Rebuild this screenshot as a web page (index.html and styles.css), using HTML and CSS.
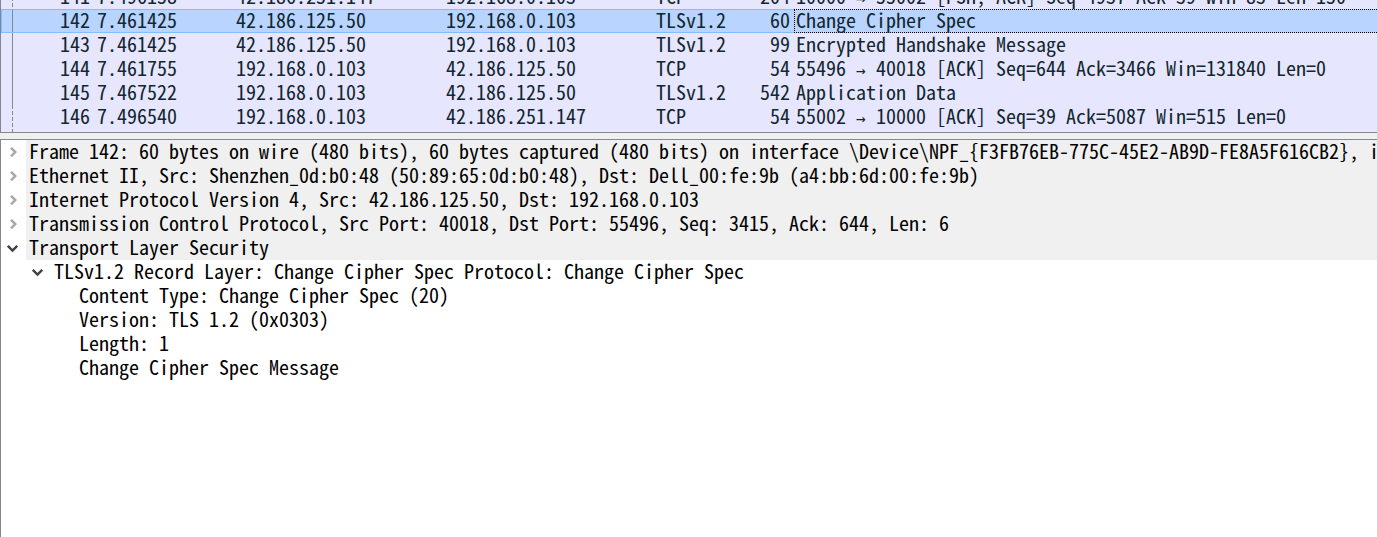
FILE: index.html
```
<!DOCTYPE html>
<html lang="en">
<head>
<meta charset="utf-8">
<title>Packet capture</title>
<link rel="stylesheet" href="styles.css">
</head>
<body>
<main class="window">
  <section class="packets" aria-label="Packet list">
    <table class="packet-table">
      <colgroup><col class="c-mark"><col class="c-no"><col class="c-time"><col class="c-addr"><col class="c-addr"><col class="c-proto"><col class="c-len"><col></colgroup>
      <tbody>
        <tr><td class="mark dashed"></td><td class="num">141</td><td>7.496158</td><td>42.186.251.147</td><td>192.168.0.103</td><td>TCP</td><td class="num">204</td><td class="info">10000 <span class="arrow">→</span> 55002 [PSH, ACK] Seq=4937 Ack=39 Win=83 Len=150</td></tr>
        <tr class="selected"><td class="mark"></td><td class="num">142</td><td>7.461425</td><td>42.186.125.50</td><td>192.168.0.103</td><td>TLSv1.2</td><td class="num">60</td><td class="info focused">Change Cipher Spec</td></tr>
        <tr><td class="mark"></td><td class="num">143</td><td>7.461425</td><td>42.186.125.50</td><td>192.168.0.103</td><td>TLSv1.2</td><td class="num">99</td><td class="info">Encrypted Handshake Message</td></tr>
        <tr><td class="mark"></td><td class="num">144</td><td>7.461755</td><td>192.168.0.103</td><td>42.186.125.50</td><td>TCP</td><td class="num">54</td><td class="info">55496 <span class="arrow">→</span> 40018 [ACK] Seq=644 Ack=3466 Win=131840 Len=0</td></tr>
        <tr><td class="mark"></td><td class="num">145</td><td>7.467522</td><td>192.168.0.103</td><td>42.186.125.50</td><td>TLSv1.2</td><td class="num">542</td><td class="info">Application Data</td></tr>
        <tr><td class="mark dashed"></td><td class="num">146</td><td>7.496540</td><td>192.168.0.103</td><td>42.186.251.147</td><td>TCP</td><td class="num">54</td><td class="info">55002 <span class="arrow">→</span> 10000 [ACK] Seq=39 Ack=5087 Win=515 Len=0</td></tr>
      </tbody>
      <tfoot><tr class="rest"><td class="mark dashed"></td><td colspan="7"></td></tr></tfoot>
    </table>
  </section>
  <section class="details" aria-label="Packet details">
    <ul class="tree">
      <li><div class="node"><button class="toggle" aria-label="Expand frame"><svg class="chevron closed" viewBox="0 0 12 12"><path d="M4 1.800l4.300 4.300L4 10.400"/></svg></button><span class="label shaded">Frame 142: 60 bytes on wire (480 bits), 60 bytes captured (480 bits) on interface \Device\NPF_{F3FB76EB-775C-45E2-AB9D-FE8A5F616CB2}, id 0</span></div></li>
      <li><div class="node"><button class="toggle" aria-label="Expand Ethernet"><svg class="chevron closed" viewBox="0 0 12 12"><path d="M4 1.800l4.300 4.300L4 10.400"/></svg></button><span class="label shaded">Ethernet II, Src: Shenzhen_0d:b0:48 (50:89:65:0d:b0:48), Dst: Dell_00:fe:9b (a4:bb:6d:00:fe:9b)</span></div></li>
      <li><div class="node"><button class="toggle" aria-label="Expand Internet Protocol"><svg class="chevron closed" viewBox="0 0 12 12"><path d="M4 1.800l4.300 4.300L4 10.400"/></svg></button><span class="label shaded">Internet Protocol Version 4, Src: 42.186.125.50, Dst: 192.168.0.103</span></div></li>
      <li><div class="node"><button class="toggle" aria-label="Expand Transmission Control Protocol"><svg class="chevron closed" viewBox="0 0 12 12"><path d="M4 1.800l4.300 4.300L4 10.400"/></svg></button><span class="label shaded">Transmission Control Protocol, Src Port: 40018, Dst Port: 55496, Seq: 3415, Ack: 644, Len: 6</span></div></li>
      <li><div class="node"><button class="toggle" aria-label="Collapse Transport Layer Security" aria-expanded="true"><svg class="chevron" viewBox="0 0 12 12"><path d="M.8 3.800l4.700 4.700 4.700-4.700"/></svg></button><span class="label shaded">Transport Layer Security</span></div>
        <ul class="branch">
          <li><div class="node"><button class="toggle" aria-label="Collapse record layer" aria-expanded="true"><svg class="chevron" viewBox="0 0 12 12"><path d="M.8 3.800l4.700 4.700 4.700-4.700"/></svg></button><span class="label">TLSv1.2 Record Layer: Change Cipher Spec Protocol: Change Cipher Spec</span></div>
            <ul class="leaves">
              <li class="label">Content Type: Change Cipher Spec (20)</li>
              <li class="label">Version: TLS 1.2 (0x0303)</li>
              <li class="label">Length: 1</li>
              <li class="label">Change Cipher Spec Message</li>
            </ul>
          </li>
        </ul>
      </li>
    </ul>
  </section>
</main>
</body>
</html>
```
FILE: styles.css
```
* { box-sizing: border-box; }
body {
  margin: 0;
  background: #f0f0f0;
  color: #000;
  font: 20px/22px "Noto Sans Mono CJK SC", "Liberation Mono", monospace;
}
.window {
  display: flex;
  flex-direction: column;
  gap: 6px;
  height: 100vh;
  overflow: hidden;
}
.packets {
  flex: none;
  overflow: hidden;
  background: #e7e6ff;
  border-left: 1px solid #828790;
  border-bottom: 1px solid #828790;
  color: #12272e;
}
.packet-table {
  width: 100%;
  margin-top: -15px;
  table-layout: fixed;
  border-collapse: separate;
  border-spacing: 0;
}
.c-mark { width: 25px; }
.c-no { width: 68px; }
.c-time { width: 139px; }
.c-addr { width: 210px; }
.c-proto { width: 80px; }
.c-len { width: 61px; }
td {
  height: 24px;
  padding: 0 3px;
  vertical-align: top;
  white-space: pre;
}
.num {
  padding-right: 4px;
  text-align: right;
}
.info { padding-left: 2px; }
.arrow {
  display: inline-block;
  width: 10px;
  font-family: "DejaVu Sans Mono", monospace;
  font-size: 16px;
  line-height: 16px;
}
.mark {
  background: linear-gradient(#828790, #828790) 11px 0 / 1px 100% no-repeat;
}
.mark.dashed {
  background: repeating-linear-gradient(#828790 0 4px, transparent 4px 6px) 11px 0 / 1px 100% no-repeat;
}
.selected td {
  background-color: #b8d4ff;
  border-top: 1px solid #84bdff;
  border-bottom: 1px solid #84bdff;
  line-height: 20px;
}
.selected .mark {
  border-left: 1px solid #84bdff;
  background-position: 10px 0;
}
.selected .focused {
  border: 1px dotted #000;
  border-right: 0;
  padding-left: 1px;
}
.rest td {
  height: 3px;
  padding: 0;
}
.details {
  flex: 1;
  overflow: hidden;
  background: #fff;
  border-top: 1px solid #828790;
  border-left: 1px solid #828790;
}
ul {
  margin: 0;
  padding: 0;
  list-style: none;
}
.node { display: flex; }
.branch { padding-left: 25px; }
.leaves { padding-left: 25px; }
.toggle {
  flex: none;
  display: flex;
  align-items: center;
  width: 25px;
  height: 24px;
  padding: 0 0 0 6px;
  border: 0;
  background: none;
}
.leaves .label { margin-left: 25px; }
.chevron {
  flex: none;
  width: 12px;
  height: 12px;
  fill: none;
  stroke: #404040;
  stroke-width: 2.4;
}
.chevron.closed { stroke: #a6a6a6; }
.label {
  flex: 1;
  height: 24px;
  padding-left: 3px;
  white-space: pre;
}
.shaded { background: #f0f0f0; }
```
